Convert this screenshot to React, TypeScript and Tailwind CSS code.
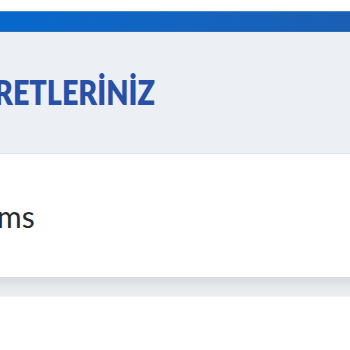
export default function App() {
  return (
    <div className="w-[350px] h-[350px] overflow-hidden bg-white" style={{ fontFamily: 'Lato, "Noto Sans", sans-serif' }}>
      <div className="h-[11px] bg-white" />
      <div className="h-[21px] border-t border-[#4a86c8] border-b border-b-[#2a6fb8] bg-gradient-to-r from-[#0668cc] to-[#1a5fb4]" />
      <div className="h-[122px] bg-[#eceff3] border-b border-[#dfe2e6] flex items-center overflow-hidden">
        <h2 className="ml-[-6px] inline-block origin-left scale-x-[0.87] whitespace-nowrap text-[33px] font-extrabold leading-none text-[#2750a6]">RETLERİNİZ</h2>
      </div>
      <div className="h-[123px] bg-white flex items-center overflow-hidden">
        <p className="ml-[-3px] whitespace-nowrap text-[30px] leading-none text-[#2b2b2b]">ms</p>
      </div>
      <div className="h-[20px] bg-gradient-to-b from-[#d6dadd] via-[#e6e9ec] to-[#ebeef1] border-b border-[#f2f4f6]" />
      <div className="h-[53px] bg-white" />
    </div>
  );
}
